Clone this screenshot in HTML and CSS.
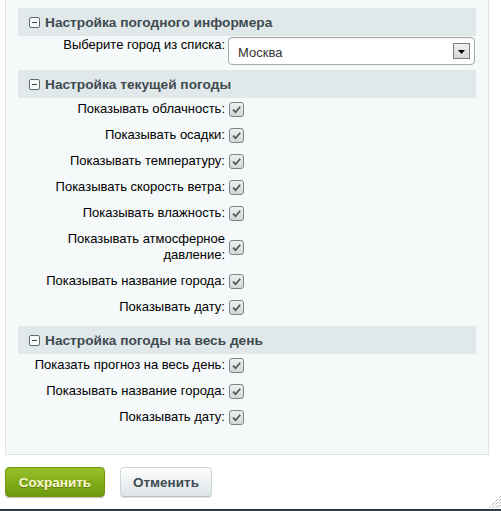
FILE: index.html
```html
<!DOCTYPE html>
<html lang="ru">
<head>
<meta charset="utf-8">
<title>Настройка погодного информера</title>
<link rel="stylesheet" href="styles.css">
</head>
<body>
<div class="panel">
  <section class="sec">
    <div class="sec-head"><span class="toggle"></span>Настройка погодного информера</div>
    <div class="row row-select">
      <label class="lbl">Выберите город из списка:</label>
      <div class="select">
        <span class="sel-text">Москва</span>
        <span class="sel-btn"><svg width="15" height="14" viewBox="0 0 15 14"><polygon points="4,6 11,6 7.5,10" fill="#000"/></svg></span>
      </div>
    </div>
  </section>

  <section class="sec">
    <div class="sec-head"><span class="toggle"></span>Настройка текущей погоды</div>
    <div class="row"><label class="lbl">Показывать облачность:</label><span class="cb"><svg width="13" height="13" viewBox="0 0 13 13"><path d="M3 6.6 L5.6 9.2 L10.2 3.8" fill="none" stroke="#4f5557" stroke-width="1.7"/></svg></span></div>
    <div class="row"><label class="lbl">Показывать осадки:</label><span class="cb"><svg width="13" height="13" viewBox="0 0 13 13"><path d="M3 6.6 L5.6 9.2 L10.2 3.8" fill="none" stroke="#4f5557" stroke-width="1.7"/></svg></span></div>
    <div class="row"><label class="lbl">Показывать температуру:</label><span class="cb"><svg width="13" height="13" viewBox="0 0 13 13"><path d="M3 6.6 L5.6 9.2 L10.2 3.8" fill="none" stroke="#4f5557" stroke-width="1.7"/></svg></span></div>
    <div class="row"><label class="lbl">Показывать скорость ветра:</label><span class="cb"><svg width="13" height="13" viewBox="0 0 13 13"><path d="M3 6.6 L5.6 9.2 L10.2 3.8" fill="none" stroke="#4f5557" stroke-width="1.7"/></svg></span></div>
    <div class="row"><label class="lbl">Показывать влажность:</label><span class="cb"><svg width="13" height="13" viewBox="0 0 13 13"><path d="M3 6.6 L5.6 9.2 L10.2 3.8" fill="none" stroke="#4f5557" stroke-width="1.7"/></svg></span></div>
    <div class="row"><label class="lbl">Показывать атмосферное давление:</label><span class="cb"><svg width="13" height="13" viewBox="0 0 13 13"><path d="M3 6.6 L5.6 9.2 L10.2 3.8" fill="none" stroke="#4f5557" stroke-width="1.7"/></svg></span></div>
    <div class="row"><label class="lbl">Показывать название города:</label><span class="cb"><svg width="13" height="13" viewBox="0 0 13 13"><path d="M3 6.6 L5.6 9.2 L10.2 3.8" fill="none" stroke="#4f5557" stroke-width="1.7"/></svg></span></div>
    <div class="row"><label class="lbl">Показывать дату:</label><span class="cb"><svg width="13" height="13" viewBox="0 0 13 13"><path d="M3 6.6 L5.6 9.2 L10.2 3.8" fill="none" stroke="#4f5557" stroke-width="1.7"/></svg></span></div>
  </section>

  <section class="sec">
    <div class="sec-head"><span class="toggle"></span>Настройка погоды на весь день</div>
    <div class="row"><label class="lbl">Показать прогноз на весь день:</label><span class="cb"><svg width="13" height="13" viewBox="0 0 13 13"><path d="M3 6.6 L5.6 9.2 L10.2 3.8" fill="none" stroke="#4f5557" stroke-width="1.7"/></svg></span></div>
    <div class="row"><label class="lbl">Показывать название города:</label><span class="cb"><svg width="13" height="13" viewBox="0 0 13 13"><path d="M3 6.6 L5.6 9.2 L10.2 3.8" fill="none" stroke="#4f5557" stroke-width="1.7"/></svg></span></div>
    <div class="row"><label class="lbl">Показывать дату:</label><span class="cb"><svg width="13" height="13" viewBox="0 0 13 13"><path d="M3 6.6 L5.6 9.2 L10.2 3.8" fill="none" stroke="#4f5557" stroke-width="1.7"/></svg></span></div>
  </section>
</div>

<div class="actions">
  <button class="btn btn-save" type="button">Сохранить</button>
  <button class="btn btn-cancel" type="button">Отменить</button>
</div>
<div class="bottom-bar"></div>
<svg class="grip" width="13" height="13" viewBox="0 0 13 13">
  <g stroke="#8a8a8a" stroke-width="1" stroke-dasharray="1 1">
    <line x1="13" y1="1" x2="1" y2="13"/>
    <line x1="13" y1="4" x2="4" y2="13"/>
    <line x1="13" y1="7" x2="7" y2="13"/>
    <line x1="13" y1="10" x2="10" y2="13"/>
  </g>
</svg>
</body>
</html>
```

FILE: styles.css
```css
html, body {
  margin: 0;
  padding: 0;
  background: #fff;
}
body {
  font-family: "Liberation Sans", Arial, sans-serif;
  font-size: 13px;
  color: #000;
  position: relative;
  height: 511px;
  overflow: hidden;
}
.panel {
  box-sizing: border-box;
  width: 484px;
  margin-left: 5px;
  background: #f5f9f9;
  border: 1px solid #dde4e6;
  border-top: none;
  padding: 8px 12px 22px 12px;
}
.sec {
  margin-bottom: 4px;
}
.sec:last-child {
  margin-bottom: 0;
}
.sec-head {
  height: 28px;
  background: #e0e8ea;
  display: flex;
  align-items: center;
  padding-left: 11px;
  gap: 5px;
  font-weight: bold;
  font-size: 13.7px;
  color: #3f4b51;
}
.toggle {
  box-sizing: border-box;
  width: 11px;
  height: 11px;
  border: 1px solid #5f6d72;
  border-radius: 2px;
  background: #f8fafa;
  position: relative;
  flex: none;
}
.toggle::after {
  content: "";
  position: absolute;
  left: 2px;
  top: 4px;
  width: 5px;
  height: 1px;
  background: #3f4b51;
}
.row {
  display: grid;
  grid-template-columns: 207px 1fr;
  column-gap: 4px;
  align-items: center;
  padding: 3px 0 7px;
}
.lbl {
  text-align: right;
  line-height: 16px;
}
.row-select {
  padding: 1px 0 1px;
  align-items: start;
  column-gap: 3px;
}
.select {
  box-sizing: border-box;
  width: 247px;
  height: 28px;
  border: 1px solid #a6aaab;
  border-radius: 4px;
  background: #fff;
  box-shadow: inset 0 1px 1px rgba(0,0,0,0.06);
  display: flex;
  align-items: center;
  justify-content: space-between;
  padding: 0 4px 0 9px;
  color: #333;
}
.sel-text {
  padding-top: 2px;
}
.sel-btn {
  box-sizing: border-box;
  width: 17px;
  height: 16px;
  border: 1px solid #7c7f80;
  background: linear-gradient(#f0f0f0, #d4d6d7);
  display: flex;
}
.cb {
  box-sizing: border-box;
  width: 15px;
  height: 15px;
  border: 1px solid #7f8587;
  border-radius: 3px;
  background: linear-gradient(#eef0f0, #d3d7d8);
  display: flex;
  align-items: center;
  justify-content: center;
}
.cb svg {
  display: block;
}
.actions {
  display: flex;
  gap: 15px;
  padding-left: 5px;
  margin-top: 12px;
}
.btn {
  box-sizing: border-box;
  height: 30px;
  border-radius: 4px;
  font-family: "Liberation Sans", Arial, sans-serif;
  font-weight: bold;
  font-size: 13.5px;
  padding: 0;
  cursor: pointer;
}
.btn-save {
  width: 100px;
  border: 1px solid #6f960d;
  background: linear-gradient(#98c12a, #6c9a0c);
  color: #fbf9cf;
  text-shadow: 0 1px 0 rgba(60,80,0,0.5);
  box-shadow: 0 1px 1px rgba(0,0,0,0.25);
}
.btn-cancel {
  width: 92px;
  border: 1px solid #cfd6d8;
  border-bottom-color: #b8c0c3;
  background: linear-gradient(#ffffff, #dce3e6);
  color: #3f4b51;
  box-shadow: 0 1px 1px rgba(0,0,0,0.12);
}
.bottom-bar {
  margin-top: 12px;
  height: 2px;
  background: #2d3a3f;
}
.grip {
  position: absolute;
  right: 0;
  bottom: 3px;
}
```
